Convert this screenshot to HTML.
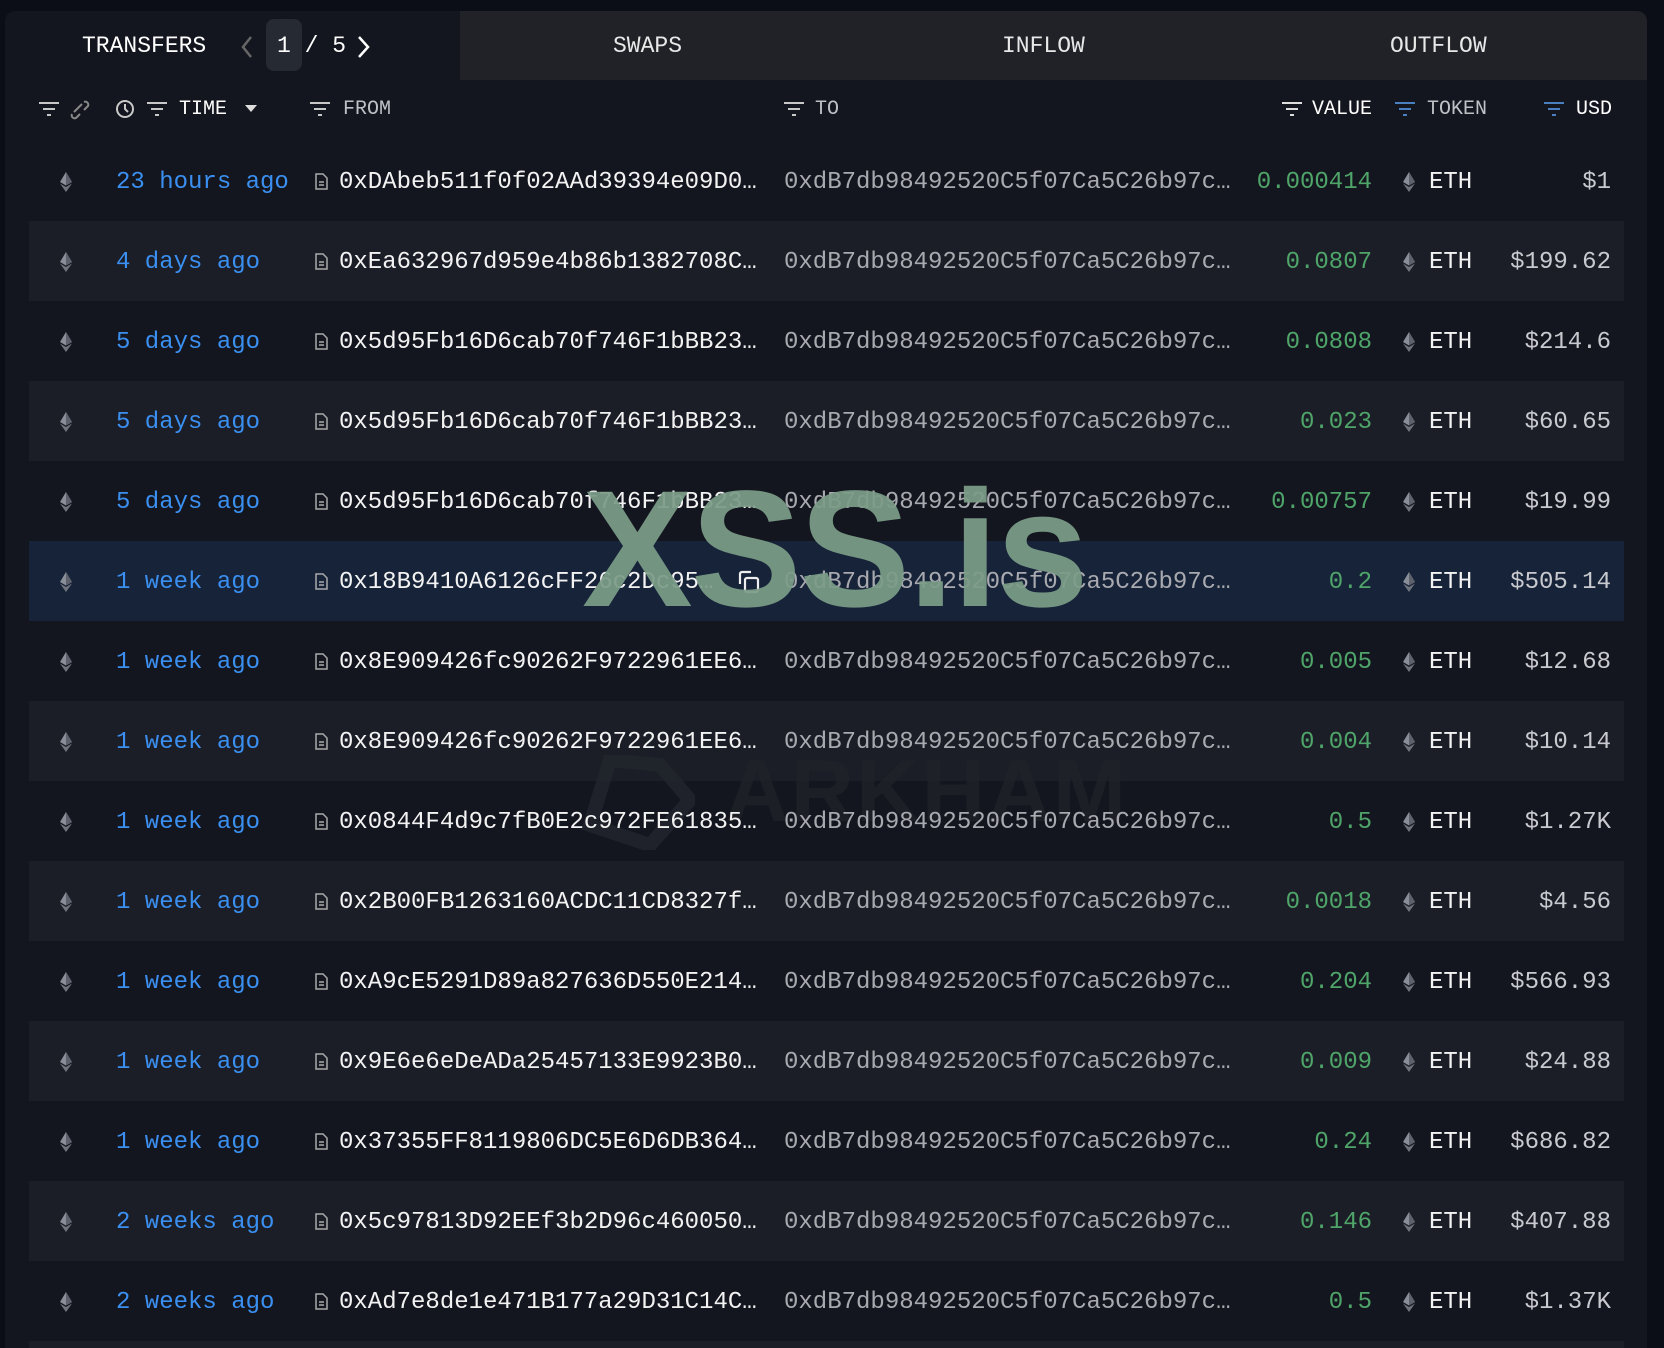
<!DOCTYPE html>
<html><head><meta charset="utf-8"><style>
*{margin:0;padding:0;box-sizing:border-box}
html,body{width:1664px;height:1348px;overflow:hidden}
body{background:#0b0e16;position:relative;font-family:"Liberation Mono",monospace;}
.panel{position:absolute;left:5px;top:11px;width:1642px;height:1337px;background:#14161f;border-radius:10px 10px 0 0;}
.tabs{position:absolute;left:460px;top:11px;width:1187px;height:69px;background:#202227;border-radius:0 10px 0 0}
.t{position:absolute;font-size:23px;color:#e8e8e8;top:33px}
.h{position:absolute;top:98px;font-size:20px;color:#bfc1c6}
.row{position:absolute;left:29px;width:1595px;height:80px}
.c{position:absolute;font-size:24px;top:2px;line-height:80px;white-space:nowrap}
.eth{position:absolute;width:12px;height:20px}
.time{color:#3a8ff0}.from{color:#f2f2f2}.to{color:#a9aab0}.val{color:#4fa569;text-align:right}.usd{color:#c9cacf;text-align:right}
.wm{position:absolute;left:582px;top:455px;font-family:"Liberation Sans",sans-serif;font-weight:bold;font-size:166px;color:#7c9d88;letter-spacing:-2px;opacity:.93}
.ark{position:absolute;left:725px;top:740px;font-family:"Liberation Sans",sans-serif;font-weight:bold;font-size:88px;color:rgba(32,35,42,.75);letter-spacing:2px}
</style></head><body>
<div class="panel"></div>
<div class="tabs"></div>
<div class="t" style="left:82px;color:#fff">TRANSFERS</div>
<div style="position:absolute;left:266px;top:19px;width:36px;height:52px;background:#262a33;border-radius:8px"></div>
<svg style="position:absolute;left:240px;top:35px" width="14" height="24"><path d="M11 2l-8 10 8 10" stroke="#666" stroke-width="2.5" fill="none"/></svg>
<div class="t" style="left:277px;color:#fff">1 / 5</div>
<svg style="position:absolute;left:356px;top:35px" width="14" height="24"><path d="M3 2l9 10-9 10" stroke="#fff" stroke-width="2.5" fill="none"/></svg>
<div class="t" style="left:613px">SWAPS</div>
<div class="t" style="left:1002px">INFLOW</div>
<div class="t" style="left:1390px">OUTFLOW</div>
<svg style="position:absolute;left:38px;top:100px" width="700" height="20" fill="none" stroke="#c8c8c8" stroke-width="2">
<path d="M1 3h20M5 9h12M9 15h4"/><path d="M36 12l8-8M34 14a3 3 0 0 0 4 4l4-4M46 2a3 3 0 0 1 4 4l-4 4" stroke="#888"/>
<circle cx="87" cy="9" r="8"/><path d="M87 4v5l3 3"/>
<path d="M109 3h20M113 9h12M117 15h4"/><path d="M207 5h12l-6 7z" fill="#ddd" stroke="none"/>
<path d="M272 3h20M276 9h12M280 15h4"/>
</svg>
<svg style="position:absolute;left:783px;top:100px" width="22" height="20" fill="none" stroke="#c8c8c8" stroke-width="2"><path d="M1 3h20M5 9h12M9 15h4"/></svg>
<svg style="position:absolute;left:1281px;top:100px" width="22" height="20" fill="none" stroke="#ddd" stroke-width="2"><path d="M1 3h20M5 9h12M9 15h4"/></svg>
<svg style="position:absolute;left:1394px;top:100px" width="22" height="20" fill="none" stroke="#4a7fc0" stroke-width="2"><path d="M1 3h20M5 9h12M9 15h4"/></svg>
<svg style="position:absolute;left:1543px;top:100px" width="22" height="20" fill="none" stroke="#4a7fc0" stroke-width="2"><path d="M1 3h20M5 9h12M9 15h4"/></svg>
<div class="h" style="left:179px;color:#fff">TIME</div>
<div class="h" style="left:343px">FROM</div>
<div class="h" style="left:815px">TO</div>
<div class="h" style="left:1312px;color:#fff">VALUE</div>
<div class="h" style="left:1427px">TOKEN</div>
<div class="h" style="left:1576px;color:#fff">USD</div>
<div id="bgs"></div>
<div style="position:absolute;left:29px;top:1341px;width:1595px;height:7px;background:#1b1e27"></div>
<svg style="position:absolute;left:580px;top:755px" width="115" height="95"><path d="M30 5l50 5 30 35-40 45-60-20z" fill="none" stroke="rgba(34,37,45,.8)" stroke-width="14"/></svg>
<div class="ark">ARKHAM</div>
<div id="rows"></div>
<div class="wm">XSS.is</div>
<script>
var d=[["23 hours ago","0xDAbeb511f0f02AAd39394e09D0…","0.000414","$1"],
["4 days ago","0xEa632967d959e4b86b1382708C…","0.0807","$199.62"],
["5 days ago","0x5d95Fb16D6cab70f746F1bBB23…","0.0808","$214.6"],
["5 days ago","0x5d95Fb16D6cab70f746F1bBB23…","0.023","$60.65"],
["5 days ago","0x5d95Fb16D6cab70f746F1bBB23…","0.00757","$19.99"],
["1 week ago","0x18B9410A6126cFF26c2Dc95…","0.2","$505.14"],
["1 week ago","0x8E909426fc90262F9722961EE6…","0.005","$12.68"],
["1 week ago","0x8E909426fc90262F9722961EE6…","0.004","$10.14"],
["1 week ago","0x0844F4d9c7fB0E2c972FE61835…","0.5","$1.27K"],
["1 week ago","0x2B00FB1263160ACDC11CD8327f…","0.0018","$4.56"],
["1 week ago","0xA9cE5291D89a827636D550E214…","0.204","$566.93"],
["1 week ago","0x9E6e6eDeADa25457133E9923B0…","0.009","$24.88"],
["1 week ago","0x37355FF8119806DC5E6D6DB364…","0.24","$686.82"],
["2 weeks ago","0x5c97813D92EEf3b2D96c460050…","0.146","$407.88"],
["2 weeks ago","0xAd7e8de1e471B177a29D31C14C…","0.5","$1.37K"]];
var eth='<svg class="eth" viewBox="0 0 12 20"><path d="M6 0L0 10l6 3.5 6-3.5z" fill="#8a8e98"/><path d="M6 0v13.5l6-3.5z" fill="#5d616b"/><path d="M0 11.5L6 20l6-8.5-6 3.5z" fill="#6f737c"/></svg>';
var h='',b='';
d.forEach(function(r,i){var top=141+80*i;var bg=i==5?'#162338':(i%2?'#1b1e27':'transparent');
b+='<div class="row" style="top:'+top+'px;background:'+bg+'"></div>';
h+='<div class="row" style="top:'+top+'px">';
h+='<div style="position:absolute;left:31px;top:31px">'+eth+'</div>'+
'<div class="c time" style="left:87px">'+r[0]+'</div>'+
'<svg style="position:absolute;left:286px;top:32px" width="13" height="17" fill="none" stroke="#aaa" stroke-width="1.5"><path d="M1 1h7l4 4v11H1z"/><path d="M4 9h5M4 12h5"/></svg>'+
'<div class="c from" style="left:310px">'+r[1]+'</div>'+
(i==5?'<svg style="position:absolute;left:707px;top:28px" width="26" height="26" fill="none" stroke="#eee" stroke-width="2.2"><path d="M4 15V5a2 2 0 0 1 2-2h9"/><rect x="9" y="9" width="13" height="14" rx="2"/></svg>':'')+
'<div class="c to" style="left:755px">0xdB7db98492520C5f07Ca5C26b97c…</div>'+
'<div class="c val" style="right:252px">'+r[2]+'</div>'+
'<div style="position:absolute;left:1374px;top:31px">'+eth+'</div>'+
'<div class="c from" style="left:1400px">ETH</div>'+
'<div class="c usd" style="right:13px">'+r[3]+'</div>';
h+='</div>';});
document.getElementById('bgs').innerHTML=b;
document.getElementById('rows').innerHTML=h;
</script>
</body></html>
